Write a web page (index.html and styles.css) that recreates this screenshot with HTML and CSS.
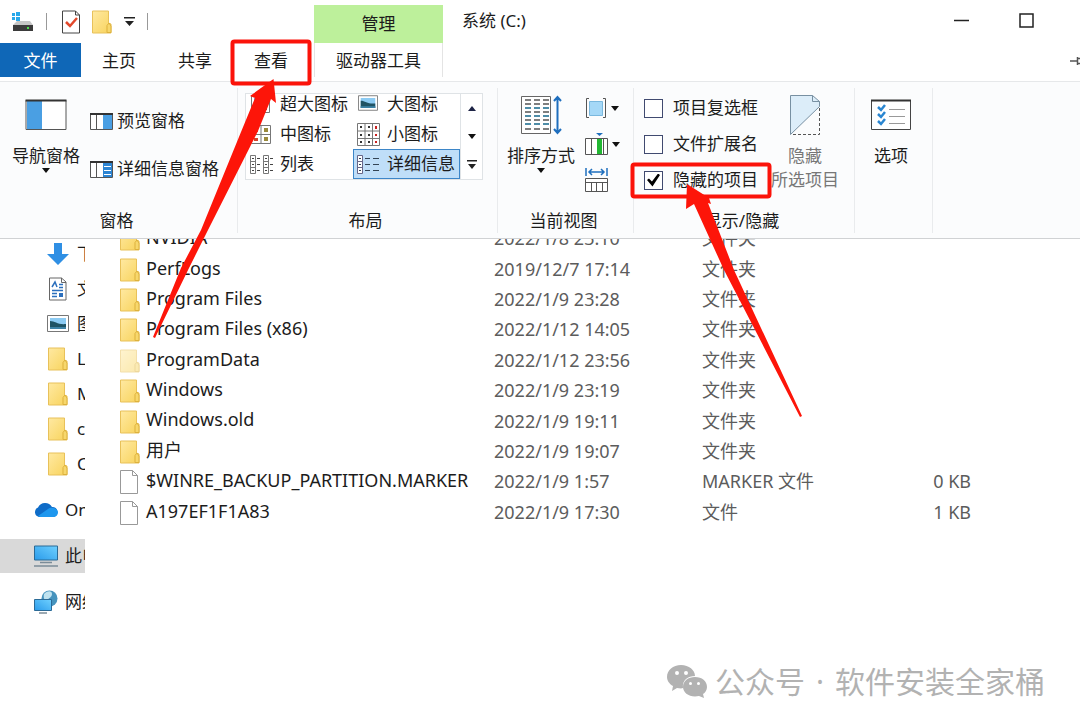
FILE: index.html
```html
<!DOCTYPE html>
<html lang="zh-CN">
  <head>
    <meta charset="utf-8" />
    <title>系统 (C:)</title>
    <link rel="stylesheet" href="styles.css">
  </head>
  <body>
    <!-- 公用图标 -->
    <svg class="symbols">
      <linearGradient id="folderFill" x1="0" y1="0" x2="1" y2="1">
        <stop offset="0" stop-color="#ffe9a2" />
        <stop offset="1" stop-color="#f8d35c" />
      </linearGradient>
      <linearGradient id="screenFill" x1="0" y1="1" x2="1" y2="0">
        <stop offset="0" stop-color="#2a9bea" />
        <stop offset="1" stop-color="#6fd0ff" />
      </linearGradient>
      <symbol id="folder" viewBox="0 0 20 24">
        <path d="M.5 1h16v12l2.500 1v9H.5z" fill="url(#folderFill)" stroke="#e8c15a" />
        <path d="M15 22.500v-7l2-2.500 2 3v6.500z" fill="#f7d76c" stroke="#ddb13c" />
      </symbol>
      <symbol id="file" viewBox="0 0 20 24">
        <path d="M.5.5h12l5 5v18H.5z" fill="#fff" stroke="#999" />
        <path d="M12.500.5v5h5" fill="none" stroke="#999" />
      </symbol>
      <symbol id="caret" viewBox="0 0 8 5">
        <path d="M0 0h8L4 5z" fill="#111" />
      </symbol>
      <symbol id="photo" viewBox="0 0 22 17">
        <path d="M.5.5h21v16H.5z" fill="#fff" stroke="#777" />
        <path d="M3 3h16v11H3z" fill="#8ccbf3" />
        <path d="M3 6c5 0 8 4 16 3v5H3z" fill="#1f5364" />
        <path d="M3 12h16v2H3z" fill="#3d82a5" />
      </symbol>
    </svg>

    <header class="header">
      <div class="header-left">
        <div class="quick">
          <svg class="drive" width="23" height="20" viewBox="0 0 23 20">
            <path d="M1 1h3v3H1zM5 0h4v4H5zM1 5h3v3H1zM5 5h4v4H5z" fill="#28a8ea" />
            <path d="M6 9h13l3 4H2z" fill="#c6c6c6" />
            <path d="M2 13h20v6H2z" fill="#3b3b3b" />
            <path d="M16 15h2v2h-2z" fill="#4be04b" />
          </svg>
          <i class="quick-line"></i>
          <button class="plain" aria-label="属性">
            <svg width="18" height="24" viewBox="0 0 18 24">
              <path d="M.5 1h13l4 4v18H.5z" fill="#fff" stroke="#444" />
              <path d="M13.500 1v4h4" fill="none" stroke="#444" />
              <path d="M4 12l4 4 7-8" fill="none" stroke="#e2482b" stroke-width="2.500" />
            </svg>
          </button>
          <button class="plain" aria-label="新建文件夹">
            <svg width="20" height="24"><use href="#folder" /></svg>
          </button>
          <button class="plain" aria-label="自定义快速访问工具栏">
            <svg width="11" height="9" viewBox="0 0 11 9">
              <path d="M0 0h11v1.500H0zM1 4h9L5.500 9z" fill="#222" />
            </svg>
          </button>
          <i class="quick-line"></i>
        </div>
        <nav class="tabs">
          <a class="tab tab-file" href="#">文件</a>
          <a class="tab" href="#">主页</a>
          <a class="tab" href="#">共享</a>
          <a class="tab" href="#">查看</a>
        </nav>
      </div>
      <div class="header-tool">
        <div class="tool-title">管理</div>
        <a class="tab tool-tab" href="#">驱动器工具</a>
      </div>
      <div class="header-right">
        <div class="title-row">
          <span class="title">系统 (C:)</span>
          <button class="win-btn" aria-label="最小化">
            <svg width="15" height="15"><path d="M0 7.500h15" stroke="#222" stroke-width="1.500" /></svg>
          </button>
          <button class="win-btn" aria-label="最大化">
            <svg width="15" height="15"><path d="M1 1h13v13H1z" fill="none" stroke="#222" stroke-width="1.500" /></svg>
          </button>
        </div>
        <div class="pin-row">
          <svg width="10" height="10" viewBox="0 0 10 10">
            <path d="M0 5h7M7.500 1v8M7.500 2.500H10M7.500 7.500H10" fill="none" stroke="#555" stroke-width="1.500" />
          </svg>
        </div>
      </div>
    </header>

    <section class="ribbon">
      <div class="group group-pane">
        <div class="group-body">
          <button class="big-btn">
            <svg width="42" height="42" viewBox="0 0 42 42">
              <path d="M1 7.500h40v29H1z" fill="#fff" stroke="#555" />
              <path d="M2 8h15v28H2z" fill="#4a9fe3" />
              <path d="M.5 7.500h41" stroke="#333" stroke-width="2" />
            </svg>
            <span>导航窗格</span>
            <svg class="caret" width="8" height="5"><use href="#caret" /></svg>
          </button>
          <div class="pane-list">
            <button class="row-btn">
              <svg width="23" height="17" viewBox="0 0 23 17">
                <path d="M.5.5h22v16H.5zM6.500 1v15" fill="#fff" stroke="#555" />
                <path d="M13 2h9v14h-9z" fill="#4a9fe3" />
                <path d="M0 1h23" stroke="#333" stroke-width="2" />
              </svg>预览窗格
            </button>
            <button class="row-btn">
              <svg width="23" height="17" viewBox="0 0 23 17">
                <path d="M.5.5h22v16H.5zM6.500 1v15" fill="#fff" stroke="#555" />
                <path d="M13 2h9v14h-9z" fill="#2c84d2" />
                <path d="M14 5.500h7M14 9.500h7M14 13.500h7" stroke="#fff" />
                <path d="M0 1h23" stroke="#333" stroke-width="2" />
              </svg>详细信息窗格
            </button>
          </div>
        </div>
        <div class="group-name">窗格</div>
      </div>

      <div class="group group-layout">
        <div class="gallery">
          <div class="gallery-items">
            <button class="view-item">
              <svg width="23" height="23" viewBox="0 0 23 23">
                <path d="M1.500 2.500h18v17h-18z" fill="#fff" stroke="#777" />
                <path d="M4 5h13v12H4z" fill="#6fa9e8" />
                <path d="M4 13l5-4 8 5v3H4z" fill="#3a62ab" />
              </svg>超大图标
            </button>
            <button class="view-item">
              <svg width="23" height="23" viewBox="0 0 23 23"><use href="#photo" x="1" y="2" width="20" height="16" /></svg>大图标
            </button>
            <button class="view-item">
              <svg width="23" height="23" viewBox="0 0 23 23">
                <path d="M1.500 2.500h19v18h-19zM11 2.500v18M1.500 11.500h19" fill="#fff" stroke="#777" />
                <path d="M4 5h4v4H4zM4 15h4v3H4z" fill="#d3442c" />
                <path d="M14 5h4v4h-4zM14 14h4v4h-4z" fill="#9a8a3c" />
              </svg>中图标
            </button>
            <button class="view-item">
              <svg width="23" height="23" viewBox="0 0 23 23">
                <path d="M.5.5h22v22H.5zM8 .5v22M15.500.5v22M.5 8h22M.5 15.500h22" fill="#fff" stroke="#777" />
                <path d="M3 3h2v2H3zM11 3h2v2h-2zM3 11h2v2H3zM11 11h2v2h-2zM3 18h2v2H3zM11 18h2v2h-2z" fill="#333" />
                <path d="M18 3h2v3h-2zM18 11h2v2h-2zM18 18h2v2h-2z" fill="#c22" />
              </svg>小图标
            </button>
            <button class="view-item">
              <svg width="23" height="23" viewBox="0 0 23 23">
                <path d="M.5 2.500h5v18h-5zM.5 8.500h5M.5 14.500h5M13.500 2.500h5v18h-5zM13.500 8.500h5M13.500 14.500h5" fill="#fff" stroke="#777" />
                <path d="M7 5.500h3M7 11.500h3M7 17.500h3M20 5.500h3M20 11.500h3M20 17.500h3M2 5.500h2M2 11.500h2M2 17.500h2M15 5.500h2M15 11.500h2M15 17.500h2" stroke="#444" />
              </svg>列表
            </button>
            <button class="view-item selected">
              <svg width="23" height="23" viewBox="0 0 23 23">
                <path d="M.5 2.500h5v18h-5zM.5 8.500h5M.5 14.500h5" fill="#fff" stroke="#668" />
                <path d="M8 5.500h5M8 11.500h5M8 17.500h5M16 5.500h6M16 11.500h6M16 17.500h6M2 5.500h2M2 11.500h2M2 17.500h2" stroke="#345" />
              </svg>详细信息
            </button>
          </div>
          <div class="gallery-scroll">
            <button class="plain" aria-label="向上"><svg width="8" height="5" viewBox="0 0 8 5"><path d="M0 5h8L4 0z" fill="#1d2345" /></svg></button>
            <button class="plain" aria-label="向下"><svg width="8" height="5"><use href="#caret" /></svg></button>
            <button class="plain" aria-label="更多"><svg width="10" height="9" viewBox="0 0 10 9"><path d="M0 0h10v1.500H0zM1 4h8L5 9z" fill="#222" /></svg></button>
          </div>
        </div>
        <div class="group-name">布局</div>
      </div>

      <div class="group group-current">
        <div class="group-body">
          <button class="big-btn">
            <svg width="42" height="42" viewBox="0 0 42 42">
              <path d="M1.500 3.500h29v37h-29z" fill="#fff" stroke="#666" />
              <path d="M5 7h24M5 11h24M5 19h24M5 27h24M5 36h24" stroke="#555" stroke-width="1.500" stroke-dasharray="6 3" />
              <path d="M5 15h24M5 23h24M5 31h24" stroke="#4e8da8" stroke-width="2" stroke-dasharray="6 3" />
              <path d="M37.500 5v34M34 8l3.500-4L41 8M34 36l3.500 4 3.500-4" fill="none" stroke="#1f6fbe" stroke-width="2" />
            </svg>
            <span>排序方式</span>
            <svg class="caret" width="8" height="5"><use href="#caret" /></svg>
          </button>
          <div class="tool-list">
            <button class="plain" aria-label="分组依据">
              <svg width="22" height="22" viewBox="0 0 22 22">
                <path d="M4 1.500H1.500v19H4M18 1.500h2.500v19H18" fill="none" stroke="#555" />
                <path d="M4.500 4.500h13v14h-13z" fill="#a5d8f7" stroke="#7ab8de" />
              </svg>
              <svg width="8" height="5"><use href="#caret" /></svg>
            </button>
            <button class="plain" aria-label="添加列">
              <svg width="23" height="22" viewBox="0 0 23 22">
                <path d="M.5 5.500h22v16H.5zM6.500 5.500v16M18.500 5.500v16" fill="#fff" stroke="#555" />
                <path d="M12 6h5v15h-5z" fill="#22b733" />
                <path d="M11 0h7l-3.500 3z" fill="#1f6fbe" />
              </svg>
              <svg width="8" height="5"><use href="#caret" /></svg>
            </button>
            <button class="plain" aria-label="将所有列调整为合适的大小">
              <svg width="23" height="24" viewBox="0 0 23 24">
                <path d="M1 0v8M22 0v8M4 4h15M7 1L4 4l3 3M16 1l3 3-3 3" fill="none" stroke="#1f6fbe" stroke-width="1.500" />
                <path d="M.5 10.500h22v13H.5zM.5 14.500h22M6.500 14.500v9M11.500 14.500v9M17.500 14.500v9" fill="#fff" stroke="#555" />
              </svg>
            </button>
          </div>
        </div>
        <div class="group-name">当前视图</div>
      </div>

      <div class="group group-show">
        <div class="group-body">
          <div class="check-list">
            <label class="check"><input type="checkbox" />项目复选框</label>
            <label class="check"><input type="checkbox" />文件扩展名</label>
            <label class="check"><input type="checkbox" checked />隐藏的项目</label>
          </div>
          <button class="big-btn disabled" disabled>
            <svg width="32" height="42" viewBox="0 0 32 42">
              <path d="M1.500 2.500h22l7 6v5l-29 28z" fill="#dcedf9" />
              <path d="M23.500 2.500h-22v39l29-28v-5zv6h7" fill="none" stroke="#7890a2" />
              <path d="M30.500 15v26.500H3" fill="none" stroke="#555" stroke-dasharray="3 2" />
            </svg>
            <span>隐藏</span>
            <span>所选项目</span>
          </button>
        </div>
        <div class="group-name">显示/隐藏</div>
      </div>

      <div class="group group-option">
        <div class="group-body">
          <button class="big-btn">
            <svg width="42" height="42" viewBox="0 0 42 42">
              <path d="M1.500 7.500h39v29h-39z" fill="#fff" stroke="#444" />
              <path d="M1 7.500h40" stroke="#333" stroke-width="2" />
              <path d="M19 16.500h16M19 23.500h16M19 30.500h16" stroke="#999" />
              <path d="M8 14l3 3 4-5M8 21l3 3 4-5M8 28l3 3 4-5" fill="none" stroke="#2a86d1" stroke-width="2.500" />
            </svg>
            <span>选项</span>
          </button>
        </div>
      </div>
    </section>

    <main class="main">
      <nav class="side">
        <a class="side-item sub" href="#">
          <svg width="22" height="24" viewBox="0 0 22 24"><path d="M7 1h8v11h7L11 23 0 12h7z" fill="#2f8fe4" /></svg>下载
        </a>
        <a class="side-item sub" href="#">
          <svg width="22" height="24" viewBox="0 0 22 24">
            <path d="M2.500 1h12l4.500 4v18H2.500z" fill="#fff" stroke="#666" />
            <path d="M14.500 1v4.500H19" fill="none" stroke="#666" />
            <path d="M5 10l3-5 2 5M12 7.500h4M12 10.500h4M5 13.500h11M5 16.500h5M5 19.500h5" fill="none" stroke="#2b6fbd" stroke-width="1.500" />
            <path d="M12 16h4v4h-4z" fill="#2b6fbd" />
          </svg>文档
        </a>
        <a class="side-item sub" href="#"><svg width="22" height="17"><use href="#photo" /></svg>图片</a>
        <a class="side-item sub" href="#"><svg width="22" height="24"><use href="#folder" /></svg>L</a>
        <a class="side-item sub" href="#"><svg width="22" height="24"><use href="#folder" /></svg>M</a>
        <a class="side-item sub" href="#"><svg width="22" height="24"><use href="#folder" /></svg>c</a>
        <a class="side-item sub" href="#"><svg width="22" height="24"><use href="#folder" /></svg>C</a>
        <a class="side-item root" href="#">
          <svg width="24" height="16" viewBox="0 0 24 16">
            <path d="M5 15a5 5 0 0 1-1-9.500A8 8 0 0 1 18 5a5 5 0 0 1 1 10z" fill="#0f6cc8" />
            <path d="M4 14l10-7c2-2 9-2 10 3 0 3-2 5-5 5H6z" fill="#1e97ee" />
          </svg>OneDrive
        </a>
        <a class="side-item root current" href="#">
          <svg width="24" height="22" viewBox="0 0 24 22">
            <path d="M.5 1h23v14H.5z" fill="url(#screenFill)" stroke="#2b6a96" />
            <path d="M6 17.500h12M0 21h24" stroke="#7b8c98" stroke-width="1.500" />
          </svg>此电脑
        </a>
        <a class="side-item root" href="#">
          <svg width="24" height="24" viewBox="0 0 24 24">
            <circle cx="15.500" cy="8.500" r="8" fill="#4693bd" />
            <path d="M10 4c4-4 8-3 8 0s-3 4-5 6-4-2-3-6z" fill="#bfe2ef" />
            <path d="M.5 9.500h17v11H.5z" fill="url(#screenFill)" stroke="#2b6a96" />
            <path d="M5 23h8" stroke="#7b8c98" stroke-width="1.500" />
          </svg>网络
        </a>
      </nav>

      <div class="list">
        <table class="files">
          <tbody>
            <tr>
              <td class="name"><svg width="20" height="24"><use href="#folder" /></svg>NVIDIA</td>
              <td class="date">2022/1/8 23:10</td>
              <td class="type">文件夹</td>
              <td class="size"></td>
            </tr>
            <tr>
              <td class="name"><svg width="20" height="24"><use href="#folder" /></svg>PerfLogs</td>
              <td class="date">2019/12/7 17:14</td>
              <td class="type">文件夹</td>
              <td class="size"></td>
            </tr>
            <tr>
              <td class="name"><svg width="20" height="24"><use href="#folder" /></svg>Program Files</td>
              <td class="date">2022/1/9 23:28</td>
              <td class="type">文件夹</td>
              <td class="size"></td>
            </tr>
            <tr>
              <td class="name"><svg width="20" height="24"><use href="#folder" /></svg>Program Files (x86)</td>
              <td class="date">2022/1/12 14:05</td>
              <td class="type">文件夹</td>
              <td class="size"></td>
            </tr>
            <tr>
              <td class="name"><svg class="faded" width="20" height="24"><use href="#folder" /></svg>ProgramData</td>
              <td class="date">2022/1/12 23:56</td>
              <td class="type">文件夹</td>
              <td class="size"></td>
            </tr>
            <tr>
              <td class="name"><svg width="20" height="24"><use href="#folder" /></svg>Windows</td>
              <td class="date">2022/1/9 23:19</td>
              <td class="type">文件夹</td>
              <td class="size"></td>
            </tr>
            <tr>
              <td class="name"><svg width="20" height="24"><use href="#folder" /></svg>Windows.old</td>
              <td class="date">2022/1/9 19:11</td>
              <td class="type">文件夹</td>
              <td class="size"></td>
            </tr>
            <tr>
              <td class="name"><svg width="20" height="24"><use href="#folder" /></svg>用户</td>
              <td class="date">2022/1/9 19:07</td>
              <td class="type">文件夹</td>
              <td class="size"></td>
            </tr>
            <tr>
              <td class="name"><svg width="20" height="24"><use href="#file" /></svg>$WINRE_BACKUP_PARTITION.MARKER</td>
              <td class="date">2022/1/9 1:57</td>
              <td class="type">MARKER 文件</td>
              <td class="size">0 KB</td>
            </tr>
            <tr>
              <td class="name"><svg width="20" height="24"><use href="#file" /></svg>A197EF1F1A83</td>
              <td class="date">2022/1/9 17:30</td>
              <td class="type">文件</td>
              <td class="size">1 KB</td>
            </tr>
          </tbody>
        </table>
      </div>
    </main>

    <!-- 红框和箭头标注 -->
    <svg class="marks" width="1080" height="725" viewBox="0 0 1080 725">
      <rect x="232.500" y="41.500" width="77" height="42" rx="2" fill="none" stroke="#fb130a" stroke-width="4" />
      <rect x="632.500" y="164.500" width="137" height="32" rx="2" fill="none" stroke="#fb130a" stroke-width="4" />
      <path d="M273.500 79L276 103l-5-4-13 32-50 99-19 38-34 70-2-1 28-69 20-38 40-98 14-34-5-2z" fill="#fd1509" />
      <path d="M687 184l22 14 2 6-3-1 26 67 68 146-2 1-76-147-30-66-8 5z" fill="#fd1509" />
    </svg>

    <div class="watermark">
      <svg width="40" height="34" viewBox="0 0 40 34">
        <path d="M14 0c8 0 14 5 14 11-7 0-13 4-12 12-2 1-4 0-6 0l-5 3 1-5C2 19 0 15 0 12 0 5 6 0 14 0z" fill="#b2b2b2" />
        <path d="M28 12c7 0 12 4 12 10 0 3-2 6-4 7l1 4-5-2c-9 2-16-3-16-9s5-10 12-10z" fill="#b2b2b2" />
        <path d="M8 8a2 2 0 1 1 4 0 2 2 0 0 1-4 0M17 8a2 2 0 1 1 4 0 2 2 0 0 1-4 0M22 18.500a1.500 1.500 0 1 1 3 0 1.500 1.500 0 0 1-3 0M30 18.500a1.500 1.500 0 1 1 3 0 1.500 1.500 0 0 1-3 0" fill="#fff" />
      </svg>
      <span>公众号</span><span class="dot">·</span><span>软件安装全家桶</span>
    </div>
  </body>
</html>
```
FILE: styles.css
```css
* {
  box-sizing: border-box;
}
body {
  margin: 0;
  min-height: 100vh;
  position: relative;
  display: flex;
  flex-direction: column;
  overflow: hidden;
  background-color: #fff;
  color: #1c1c1c;
  font-family: "Noto Sans", "Noto Sans CJK SC", sans-serif;
  font-size: 17px;
  line-height: 24px;
}
a {
  color: inherit;
  text-decoration: none;
}
button {
  padding: 0;
  border: none;
  background: none;
  color: inherit;
  font: inherit;
  white-space: nowrap;
}
svg {
  flex-shrink: 0;
}
.symbols {
  position: absolute;
  width: 0;
  height: 0;
}
.plain {
  display: flex;
  align-items: center;
  justify-content: center;
}

/* 标题栏和选项卡 */
.header {
  display: flex;
  height: 81px;
}
.header-left {
  width: 314px;
}
.quick {
  display: flex;
  align-items: center;
  gap: 12px;
  height: 43px;
  padding-left: 11px;
}
.quick-line {
  width: 1px;
  height: 17px;
  margin-right: 3px;
  background-color: #999;
}
.tabs {
  display: flex;
}
.tab {
  width: 76px;
  height: 34px;
  line-height: 36px;
  text-align: center;
}
.tab-file {
  width: 81px;
  background-color: #0f67b7;
  color: #fff;
}
.header-tool {
  width: 129px;
  padding-top: 5px;
}
.tool-title {
  height: 38px;
  line-height: 38px;
  text-align: center;
  background-color: #bdf09b;
}
.tool-tab {
  display: block;
  width: auto;
  border-left: 1px solid #e4e4e4;
  border-right: 1px solid #e4e4e4;
}
.header-right {
  flex: 1;
}
.title-row {
  display: flex;
  align-items: center;
  height: 41px;
  padding: 0 21px 0 19px;
}
.title {
  flex: 1;
}
.win-btn {
  display: flex;
  justify-content: center;
  width: 65px;
}
.pin-row {
  display: flex;
  align-items: center;
  justify-content: flex-end;
  height: 40px;
}

/* 功能区 */
.ribbon {
  display: flex;
  height: 158px;
  border-top: 1px solid #e6e8ea;
  border-bottom: 1px solid #d0d2d4;
  background-color: #fbfcfd;
}
.group {
  display: flex;
  flex-direction: column;
  justify-content: space-between;
  margin: 6px 0 5px;
  padding-top: 5px;
  border-right: 1px solid #e9ebed;
}
.group-body {
  display: flex;
  align-items: flex-start;
}
.group-name {
  padding-right: 4px;
  text-align: center;
}
.group-pane {
  width: 238px;
}
.group-layout {
  width: 260px;
}
.group-current {
  width: 136px;
}
.group-show {
  width: 221px;
}
.group-option {
  width: 78px;
}
.big-btn {
  display: flex;
  flex-direction: column;
  align-items: center;
}
.big-btn span {
  margin-top: 9px;
}
.big-btn span + span {
  margin-top: 0;
}
.disabled {
  color: #777;
}
.group-pane .group-body {
  gap: 10px;
  padding-left: 12px;
}
.pane-list {
  display: flex;
  flex-direction: column;
  gap: 24px;
  padding-top: 16px;
}
.row-btn {
  display: flex;
  align-items: center;
  gap: 4px;
}
.gallery {
  display: flex;
  height: 87px;
  margin: 0 14px 0 7px;
  border: 1px solid #dfe3e6;
  background-color: #fff;
  overflow: hidden;
}
.gallery-items {
  flex: 1;
  display: grid;
  grid-template-columns: 107px 107px;
  grid-template-rows: 30px 30px 30px;
  align-content: end;
}
.view-item {
  display: flex;
  align-items: center;
  gap: 7px;
  padding-left: 3px;
  border: 1px solid transparent;
}
.view-item.selected {
  border-color: #3d86c8;
  background-color: #bfdef8;
}
.gallery-scroll {
  width: 22px;
  display: flex;
  flex-direction: column;
  border-left: 1px solid #dfe3e6;
}
.gallery-scroll button {
  flex: 1;
}
.group-current .group-body {
  gap: 10px;
  padding-left: 9px;
}
.tool-list {
  display: flex;
  flex-direction: column;
  gap: 12px;
  padding-top: 3px;
}
.tool-list button {
  justify-content: flex-start;
  gap: 4px;
  height: 24px;
}
.group-show .group-body {
  gap: 13px;
  padding-left: 10px;
}
.check-list {
  display: flex;
  flex-direction: column;
  gap: 12px;
  padding-top: 3px;
}
.check {
  display: flex;
  align-items: center;
  gap: 10px;
  white-space: nowrap;
}
.check input {
  appearance: none;
  display: flex;
  align-items: center;
  justify-content: center;
  width: 19px;
  height: 19px;
  margin: 0;
  border: 1px solid #404a70;
  background-color: #fff;
}
.check input:checked::after {
  content: "";
  width: 13px;
  height: 13px;
  background-color: #000;
  clip-path: polygon(0 50%, 15% 38%, 38% 62%, 85% 0, 100% 12%, 42% 100%);
}
.group-option .big-btn {
  width: 72px;
}

/* 导航窗格和文件列表 */
.main {
  flex: 1;
  display: flex;
  overflow: hidden;
}
.side {
  width: 85px;
  margin-top: -3px;
  overflow: hidden;
}
.side-item {
  display: flex;
  align-items: center;
  white-space: nowrap;
}
.sub {
  gap: 8px;
  height: 35px;
  padding-left: 47px;
}
.root {
  gap: 7px;
  height: 34px;
  margin-top: 12px;
  padding-left: 34px;
}
.current {
  background-color: #d9d9d9;
}
.list {
  flex: 1;
  padding-left: 35px;
}
.files {
  width: 851px;
  height: 304px;
  margin-top: -16px;
  border-collapse: collapse;
  table-layout: fixed;
  font-size: 18px;
}
.files td {
  padding: 0;
  white-space: nowrap;
}
.name {
  width: 374px;
}
.name svg {
  margin-right: 6px;
  vertical-align: middle;
}
.faded {
  opacity: 0.5;
}
.date {
  width: 208px;
}
.date,
.type,
.size {
  color: #5c5c5c;
}
.size {
  text-align: right;
}

.marks {
  position: absolute;
  top: 0;
  left: 0;
  pointer-events: none;
}
.watermark {
  position: absolute;
  right: 35px;
  bottom: 22px;
  display: flex;
  align-items: center;
  color: #b2b2b2;
  font-size: 30px;
  line-height: 42px;
}
.watermark svg {
  margin-right: 8px;
}
.dot {
  width: 30px;
  text-align: center;
}
```
